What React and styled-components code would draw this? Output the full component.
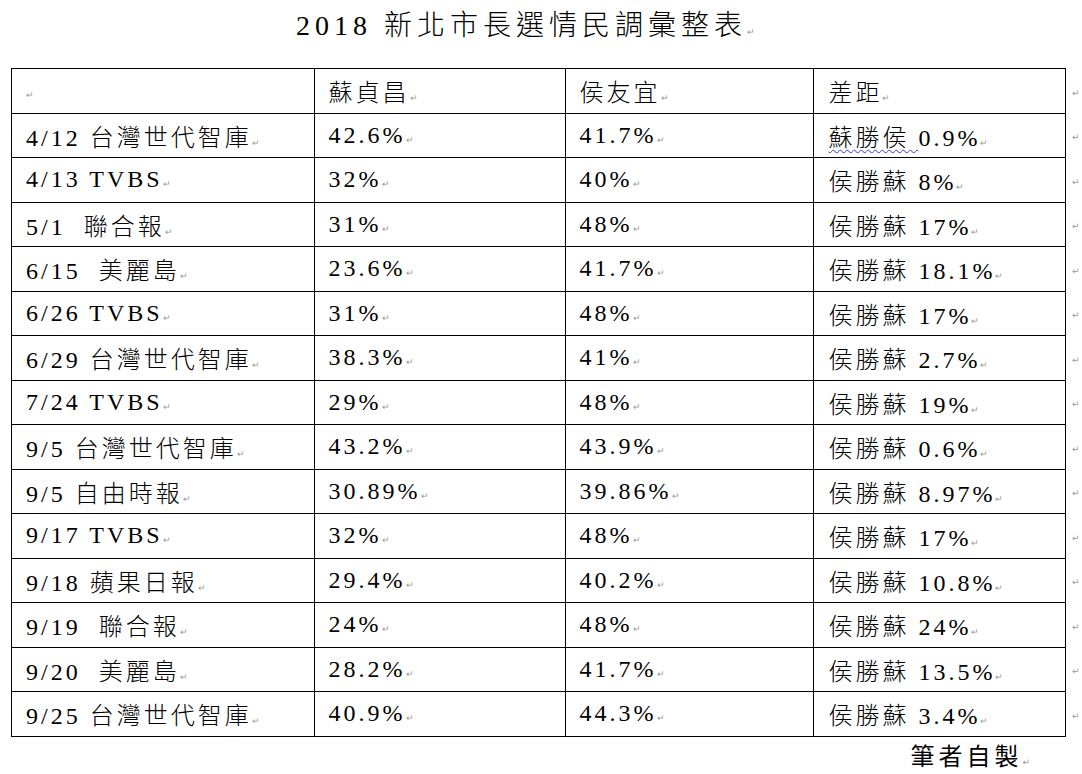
import React from 'react';
import styled, { createGlobalStyle } from 'styled-components';

const GlobalStyle = createGlobalStyle`
  body {
    margin: 0;
    background: #fff;
    color: #000;
    font-family: "Liberation Serif", "Noto Sans CJK TC", serif;
  }
`;

const Page = styled.div`
  padding: 6px 0 0 11px;
  width: 1082px;
  box-sizing: border-box;
`;

const Title = styled.div`
  display: flex;
  justify-content: center;
  align-items: baseline;
  margin-right: 42px;
  height: 40px;
  line-height: 40px;
  font-size: 28px;
  letter-spacing: 5px;
  font-weight: 300;
`;

const Mark = styled.span`
  font-family: "DejaVu Sans", sans-serif;
  font-size: 9px;
  letter-spacing: 0;
  color: #9a9a9a;
`;

const Table = styled.table`
  margin-top: 22px;
  border-collapse: collapse;
  table-layout: fixed;
`;

const Row = styled.tr`
  height: 44.5px;
`;

const Cell = styled.td`
  border: 1px solid #000;
  padding: 0 0 0 14px;
  font-size: 24px;
  letter-spacing: 3px;
  vertical-align: middle;
  white-space: nowrap;
  font-weight: 300;
`;

const RowEnd = styled.td`
  border: none;
  padding: 0 0 0 6px;
  vertical-align: middle;
`;

const CellText = styled.span`
  white-space: pre;
`;

const Spell = styled.span`
  text-decoration: underline wavy #2b3bd6;
  text-decoration-thickness: 1px;
  text-underline-offset: 3px;
`;

const Footer = styled.div`
  display: flex;
  justify-content: flex-end;
  align-items: baseline;
  margin-right: 52px;
  margin-top: 2px;
  line-height: 36px;
  font-size: 24px;
  letter-spacing: 4px;
`;

const rows = [
  ['4/12 台灣世代智庫', '42.6%', '41.7%', '0.9%', true],
  ['4/13 TVBS', '32%', '40%', '侯勝蘇 8%'],
  ['5/1  聯合報', '31%', '48%', '侯勝蘇 17%'],
  ['6/15  美麗島', '23.6%', '41.7%', '侯勝蘇 18.1%'],
  ['6/26 TVBS', '31%', '48%', '侯勝蘇 17%'],
  ['6/29 台灣世代智庫', '38.3%', '41%', '侯勝蘇 2.7%'],
  ['7/24 TVBS', '29%', '48%', '侯勝蘇 19%'],
  ['9/5 台灣世代智庫', '43.2%', '43.9%', '侯勝蘇 0.6%'],
  ['9/5 自由時報', '30.89%', '39.86%', '侯勝蘇 8.97%'],
  ['9/17 TVBS', '32%', '48%', '侯勝蘇 17%'],
  ['9/18 蘋果日報', '29.4%', '40.2%', '侯勝蘇 10.8%'],
  ['9/19  聯合報', '24%', '48%', '侯勝蘇 24%'],
  ['9/20  美麗島', '28.2%', '41.7%', '侯勝蘇 13.5%'],
  ['9/25 台灣世代智庫', '40.9%', '44.3%', '侯勝蘇 3.4%'],
];

const Text = ({ children }) => (
  <>
    <CellText>{children}</CellText>
    <Mark>↵</Mark>
  </>
);

const App = () => (
  <>
    <GlobalStyle />
    <Page>
      <Title>
        2018 新北市長選情民調彙整表<Mark>↵</Mark>
      </Title>
      <Table>
        <colgroup>
          <col style={{ width: 303 }} />
          <col style={{ width: 252 }} />
          <col style={{ width: 250 }} />
          <col style={{ width: 252 }} />
          <col style={{ width: 16 }} />
        </colgroup>
        <tbody>
          <Row>
            <Cell><Mark>↵</Mark></Cell>
            <Cell><Text>蘇貞昌</Text></Cell>
            <Cell><Text>侯友宜</Text></Cell>
            <Cell><Text>差距</Text></Cell>
            <RowEnd><Mark>↵</Mark></RowEnd>
          </Row>
          {rows.map(([name, su, hou, diff, spell]) => (
            <Row key={name}>
              <Cell><Text>{name}</Text></Cell>
              <Cell><Text>{su}</Text></Cell>
              <Cell><Text>{hou}</Text></Cell>
              <Cell>
                {spell ? (
                  <>
                    <Spell>蘇勝侯 </Spell>
                    <Text>{diff}</Text>
                  </>
                ) : (
                  <Text>{diff}</Text>
                )}
              </Cell>
              <RowEnd><Mark>↵</Mark></RowEnd>
            </Row>
          ))}
        </tbody>
      </Table>
      <Footer>
        筆者自製<Mark>↵</Mark>
      </Footer>
    </Page>
  </>
);

export default App;
